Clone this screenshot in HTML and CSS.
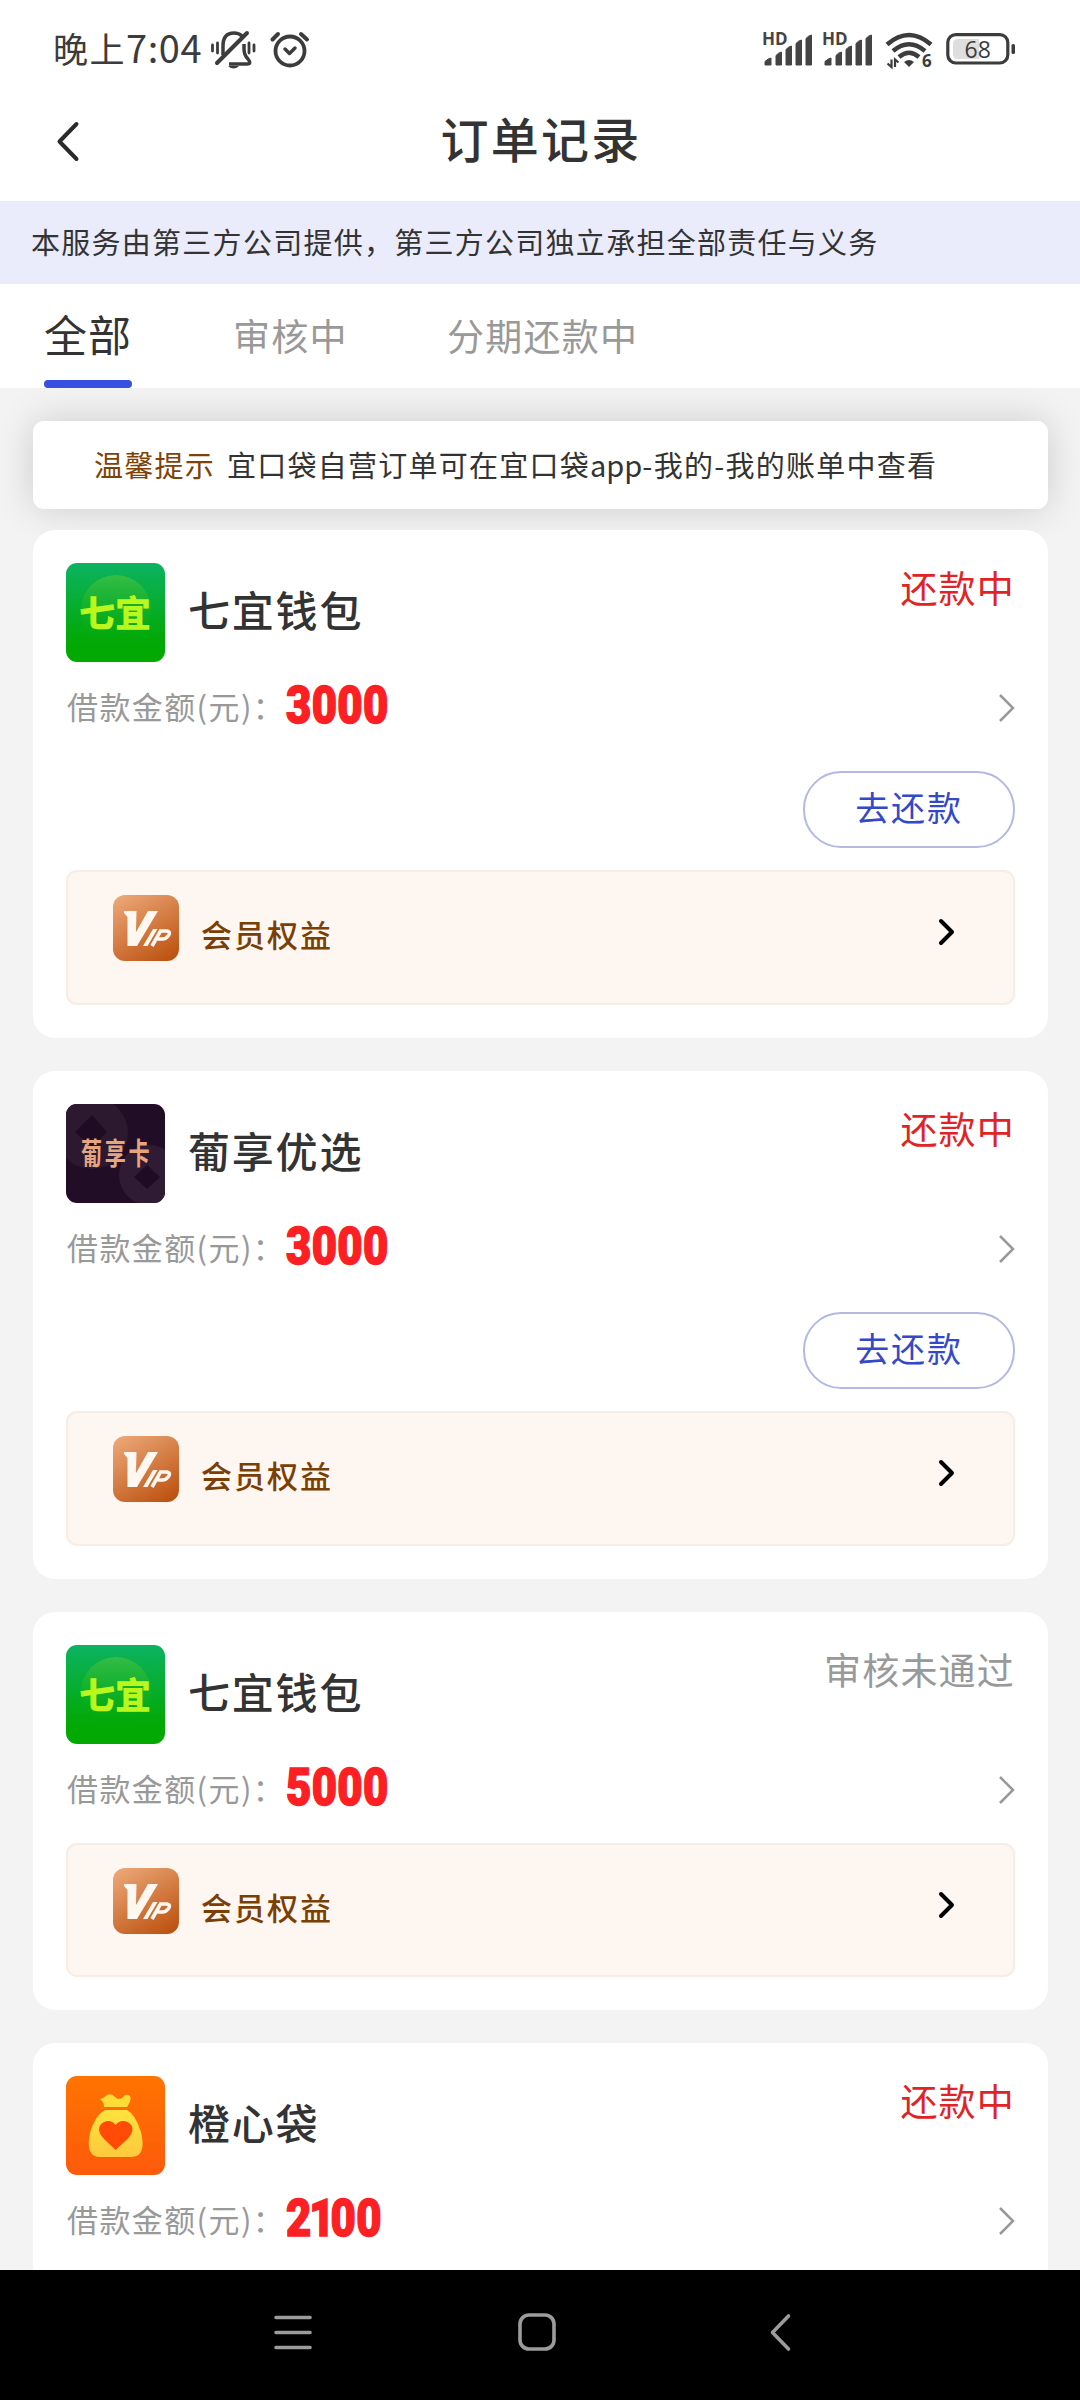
FILE: index.html
```html
<!DOCTYPE html>
<html lang="zh-CN">
<head>
<meta charset="utf-8">
<title>订单记录</title>
<link rel="stylesheet" href="styles.css">
</head>
<body>
<svg width="0" height="0" class="defs" aria-hidden="true">
  <defs>
    <linearGradient id="vipBg" x1="0.2" y1="0" x2="0.8" y2="1"><stop offset="0" stop-color="#eaa474"/><stop offset="1" stop-color="#bd5312"/></linearGradient>
    <linearGradient id="greenBg" x1="0" y1="0" x2="0" y2="1"><stop offset="0" stop-color="#0cb362"/><stop offset=".75" stop-color="#02a909"/><stop offset="1" stop-color="#02a900"/></linearGradient>
    <linearGradient id="greenDisc" x1="0" y1="0" x2="0" y2="1"><stop offset="0" stop-color="#35bd45"/><stop offset="1" stop-color="#02a909" stop-opacity="0"/></linearGradient>
    <linearGradient id="orangeBg" x1="0" y1="0" x2="0" y2="1"><stop offset="0" stop-color="#ff7401"/><stop offset="1" stop-color="#fd5a0b"/></linearGradient>
    <linearGradient id="bagFill" x1="0" y1="0" x2="0" y2="1"><stop offset="0" stop-color="#ffe23d"/><stop offset="1" stop-color="#fdc93d"/></linearGradient>
    <symbol id="vip" viewBox="0 0 66 66">
      <rect width="66" height="66" rx="12" fill="url(#vipBg)"/>
      <path d="M11 16h12.500L23 37 35 16h10L24 51H14.500V22L11 18Z" fill="#fff8f1"/>
      <path d="M40 34h4.500L34.500 51h-4.500Z" fill="#fff8f1"/>
      <path d="M39 51 47.500 36h6.500q4 1 1.500 4.500t-6 3.500h-5" fill="none" stroke="#fff8f1" stroke-width="3.600"/>
    </symbol>
    <symbol id="qiyi" viewBox="0 0 99 99">
      <rect width="99" height="99" rx="11" fill="url(#greenBg)"/>
      <circle cx="50" cy="47" r="35" fill="url(#greenDisc)"/>
      <text x="13" y="64" class="qiyi-text">七宜</text>
    </symbol>
    <symbol id="pu" viewBox="0 0 99 99">
      <clipPath id="puClip"><rect width="99" height="99" rx="11"/></clipPath>
      <g clip-path="url(#puClip)">
        <rect width="99" height="99" fill="#210d26"/>
        <circle cx="26" cy="29" r="36" fill="#2c1930"/>
        <circle cx="83" cy="71" r="30" fill="#301b34"/>
        <path d="M26 11 41 28 26 43 9 28ZM81 61 94 73 81 85 68 73Z" fill="#1f0b24"/>
      </g>
      <text x="17" y="49" class="pu-text" transform="scale(.88 1.220)">葡享卡</text>
    </symbol>
    <symbol id="orange" viewBox="0 0 99 99">
      <rect width="99" height="99" rx="11" fill="url(#orangeBg)"/>
      <path d="M34 23q4-1 7-4 5-2 8 2 4 4 8 0 3-4 7-1 2 4-3 11H38q0-5-4-8Z" fill="#fedc38"/>
      <path d="M39 34H61Q69 38 75 56 81 81 65 81H34Q19 81 24 57 29 39 39 34Z" fill="url(#bagFill)"/>
      <path d="M49.500 74 38 63Q28 52 38 46q7-3 11.500 3 5-6 12-3 10 6 0 17Z" fill="#ff4b05"/>
    </symbol>
    <symbol id="signal" viewBox="0 0 54 36">
      <text x="0" y="14" class="hd">HD</text>
      <path d="M3 34v-3.500q3-3 6-3.500V34ZM14 34V24.500q2.500-3 5.500-3.500V34ZM24 34V18.500q2.500-3 5.500-3.500V34ZM34 34V12.500q2.500-3 5.500-3.500V34ZM44 34V7.500q2.500-3 5.500-3.500V34Z" fill="#444" stroke="#444" stroke-linejoin="round"/>
    </symbol>
  </defs>
</svg>

<header class="statusbar">
  <span class="time">晚上<b>7:04</b></span>
  <svg class="st-left" width="100" height="42" viewBox="0 0 100 42" fill="none" stroke="#3c3c3c">
    <path d="M12 25V16Q12 3 23 3q5 0 8 3M33 14v5q0 6 4 10 4 5-1 5H18" stroke-width="3.500"/>
    <path d="M6 33 36 3" stroke-width="4" stroke-linecap="round"/>
    <path d="M1.500 15v6M6.500 13v10M38 13v10M43 15v6" stroke-width="2.800" stroke-linecap="round"/>
    <path d="M17 36H28Q22.500 41 17 36Z" fill="#3c3c3c" stroke="none"/>
    <circle cx="79" cy="21" r="14.500" stroke-width="3.800"/>
    <path d="M74 19l4.500 4.500L84 18" stroke-width="3.500" stroke-linecap="round" stroke-linejoin="round"/>
    <path d="M61.500 9.500 67 4M90 4l6 5.500" stroke-width="4" stroke-linecap="round"/>
  </svg>
  <div class="st-right">
    <svg width="54" height="36"><use href="#signal"/></svg>
    <svg width="54" height="36"><use href="#signal"/></svg>
    <svg class="wifi" width="54" height="42" viewBox="0 0 54 42" fill="none" stroke="#3c3c3c" stroke-width="4.500">
      <path d="M2 13.500Q24-5.500 46 13.500M8 20q16-13.500 32 0M14 26q10-8.500 20 0"/>
      <path d="M19 31q5-4 10 0l-5 5Z" fill="#3c3c3c" stroke="none"/>
      <path d="M6.500 28.500V36l-4-3.500M10 36v-7.500l3.500 3" stroke-width="2.200"/>
      <text x="37" y="36" class="six">6</text>
    </svg>
    <svg class="battery" width="72" height="34" viewBox="0 0 72 34">
      <path d="M12 6H33V26H12Q7 26 7 21V11Q7 6 12 6Z" fill="#dedede"/>
      <rect x="1.800" y="1.600" width="60" height="28.400" rx="8" fill="none" stroke="#3c3c3c" stroke-width="3.200"/>
      <rect x="65.500" y="11" width="3.500" height="10" rx="1.500" fill="#3c3c3c"/>
      <text x="18.500" y="24.500" class="batt-num">68</text>
    </svg>
  </div>
</header>

<nav class="titlebar">
  <svg class="back" width="24" height="42" viewBox="0 0 24 42"><path d="M20.500 3 3.500 20.500l17 17.500" fill="none" stroke="#2a2a2a" stroke-width="4" stroke-linecap="round" stroke-linejoin="round"/></svg>
  <h1>订单记录</h1>
</nav>

<p class="notice">本服务由第三方公司提供，第三方公司独立承担全部责任与义务</p>

<div class="tabs">
  <span class="tab active">全部</span>
  <span class="tab t2">审核中</span>
  <span class="tab t3">分期还款中</span>
</div>

<main class="list">
  <div class="tips"><span class="tips-key">温馨提示</span>宜口袋自营订单可在宜口袋<span class="latin">app</span>-我的-我的账单中查看</div>

  <section class="card">
    <div class="head"><svg class="logo"><use href="#qiyi"/></svg><h2>七宜钱包</h2><span class="state">还款中</span></div>
    <div class="amount"><span class="label">借款金额(元)：</span><strong>3000</strong><svg class="more" viewBox="0 0 17 30"><path d="M2 2 15 15 2 28"/></svg></div>
    <div class="actions"><button class="pay">去还款</button></div>
    <div class="member"><svg class="vip"><use href="#vip"/></svg><span>会员权益</span><svg class="go" viewBox="0 0 18 28"><path d="M3 3 14 14 3 25"/></svg></div>
  </section>

  <section class="card">
    <div class="head"><svg class="logo"><use href="#pu"/></svg><h2>葡享优选</h2><span class="state">还款中</span></div>
    <div class="amount"><span class="label">借款金额(元)：</span><strong>3000</strong><svg class="more" viewBox="0 0 17 30"><path d="M2 2 15 15 2 28"/></svg></div>
    <div class="actions"><button class="pay">去还款</button></div>
    <div class="member"><svg class="vip"><use href="#vip"/></svg><span>会员权益</span><svg class="go" viewBox="0 0 18 28"><path d="M3 3 14 14 3 25"/></svg></div>
  </section>

  <section class="card">
    <div class="head"><svg class="logo"><use href="#qiyi"/></svg><h2>七宜钱包</h2><span class="state failed">审核未通过</span></div>
    <div class="amount"><span class="label">借款金额(元)：</span><strong>5000</strong><svg class="more" viewBox="0 0 17 30"><path d="M2 2 15 15 2 28"/></svg></div>
    <div class="member"><svg class="vip"><use href="#vip"/></svg><span>会员权益</span><svg class="go" viewBox="0 0 18 28"><path d="M3 3 14 14 3 25"/></svg></div>
  </section>

  <section class="card">
    <div class="head"><svg class="logo"><use href="#orange"/></svg><h2>橙心袋</h2><span class="state">还款中</span></div>
    <div class="amount"><span class="label">借款金额(元)：</span><strong>2<span class="one">1</span>00</strong><svg class="more" viewBox="0 0 17 30"><path d="M2 2 15 15 2 28"/></svg></div>
  </section>
</main>

<footer class="sysnav">
  <svg width="40" height="40" viewBox="0 0 40 40"><path d="M3 5.500H37M3 20.500H37M3 35.500H37"/></svg>
  <svg width="40" height="40" viewBox="0 0 40 40"><rect x="3" y="3" width="34" height="34" rx="9"/></svg>
  <svg width="40" height="40" viewBox="0 0 40 40"><path d="M27.500 4 11.500 20.500l16 16.500"/></svg>
</footer>
</body>
</html>
```

FILE: styles.css
```css
* { box-sizing: border-box; margin: 0; padding: 0; }
body {
  width: 1080px; height: 2400px; overflow: hidden;
  display: flex; flex-direction: column;
  background: #fff; color: #333;
  font-family: "Noto Sans CJK SC", sans-serif;
}
svg { display: block; flex: none; }
.defs { position: absolute; }

.statusbar { height: 84px; display: flex; align-items: flex-start; padding: 30px 62px 0 53px; color: #3c3c3c; }
.time { width: 158px; margin-top: -2px; font-size: 35px; line-height: 38px; letter-spacing: 1.500px; white-space: nowrap; }
.time b { font-weight: 400; font-size: 38px; letter-spacing: .6px; }
.st-right { margin-left: auto; display: flex; align-items: flex-start; gap: 6px; padding-top: 1px; }
.wifi { margin-left: 3px; }
.battery { margin: 2px 0 0 1px; }
.hd { font: 700 17px "Open Sans", sans-serif; fill: #444; }
.six { font: 700 17px "Open Sans", sans-serif; fill: #3c3c3c; stroke: none; }
.batt-num { font: 400 23px "Open Sans", sans-serif; fill: #3c3c3c; }

.titlebar { height: 117px; display: flex; align-items: flex-start; padding: 24px 56px 0; }
.titlebar .back { margin-top: 13px; }
.titlebar h1 { flex: 1; text-align: center; font-size: 48px; line-height: 58px; font-weight: 500; letter-spacing: 2.200px; margin-right: 22px; }

.notice { height: 83px; line-height: 80px; padding-left: 31px; background: #eaecfc; font-size: 29px; letter-spacing: 1.270px; white-space: nowrap; }

.tabs { height: 104px; display: flex; padding-left: 44px; background: #fff; position: relative; z-index: 1; white-space: nowrap; }
.tab { font-size: 37px; line-height: 103px; letter-spacing: 1.300px; color: #999; }
.tab.active { width: 88px; font-size: 43px; line-height: 99px; letter-spacing: 1px; color: #333; text-align: center; position: relative; }
.tab.active::after { content: ""; position: absolute; left: 0; bottom: 0; width: 88px; height: 8px; border-radius: 4px; background: #3650df; }
.t2 { margin-left: 101px; }
.t3 { margin-left: 99px; }

.list { flex: 1; min-height: 0; overflow: hidden; background: #f3f3f3; padding: 33px 32px 0 33px; }
.tips { height: 88px; border-radius: 11px; background: #fff; box-shadow: 0 0 38px rgba(0,0,0,.16); padding-left: 61px; font-size: 29px; line-height: 86px; letter-spacing: 1.250px; white-space: nowrap; }
.tips-key { color: #7f4206; margin-right: 12px; }
.latin { letter-spacing: 0; }
.card { position: relative; margin-top: 33px; padding: 33px; border-radius: 22px; background: #fff; }
.tips + .card { margin-top: 21px; }

.head { height: 99px; display: flex; align-items: flex-start; }
.logo { width: 99px; height: 99px; }
.head h2 { margin-left: 23px; font-size: 42px; line-height: 92px; font-weight: 500; letter-spacing: 1.800px; }
.state { margin-left: auto; font-size: 37px; line-height: 48px; letter-spacing: 1.200px; color: #e02426; }
.state.failed { color: #999; }
.qiyi-text { font: 900 36px "Noto Sans CJK SC", sans-serif; fill: #baf71c; }
.pu-text { font: 700 24px "Noto Sans CJK SC", sans-serif; letter-spacing: 3px; fill: #e5a67f; }

.amount { height: 81px; padding-top: 1px; display: flex; align-items: center; }
.label { font-size: 31px; letter-spacing: 1.400px; color: #999; width: 219px; padding-left: 1px; white-space: nowrap; line-height: 44px; padding-top: 5px; }
.amount strong { font-family: Roboto, sans-serif; font-weight: 900; font-size: 52px; line-height: 60px; padding-top: 5px; color: #fc2024; -webkit-text-stroke: 1.500px #fc2024; transform: scaleX(.84); transform-origin: left; letter-spacing: .4px; margin-left: 1px; }
.one { margin: 0 -5px 0 -3px; }
.more { margin: 9px 0 0 auto; width: 17px; height: 30px; fill: none; stroke: #999; stroke-width: 2.500; }

.actions { height: 109px; display: flex; justify-content: flex-end; padding-top: 28px; }
.pay { width: 212px; height: 77px; border: 2px solid #b4b9e4; border-radius: 38px; background: #fff; color: #3449c8; font-family: inherit; font-size: 34px; line-height: 68px; padding-bottom: 5px; letter-spacing: 1.800px; }

.member { height: 134px; margin-top: 18px; border: 2px solid #f8ece3; border-radius: 11px; background: #fef6f0; display: flex; align-items: flex-start; padding: 23px 57px 0 45px; color: #7a3f04; }
.actions + .member { height: 135px; }
.vip { width: 66px; height: 66px; }
.member span { margin-left: 22px; font-size: 31px; line-height: 77px; font-weight: 500; letter-spacing: 2px; }
.go { margin: 23px 0 0 auto; width: 18px; height: 28px; fill: none; stroke: #000; stroke-width: 4; stroke-linecap: round; stroke-linejoin: round; }

.sysnav { height: 130px; flex: none; background: #000; display: flex; justify-content: center; gap: 204px; padding: 42px 7px 0 0; }
.sysnav svg { fill: none; stroke: #9c9c9c; stroke-width: 3.600; stroke-linecap: round; stroke-linejoin: round; }
```
